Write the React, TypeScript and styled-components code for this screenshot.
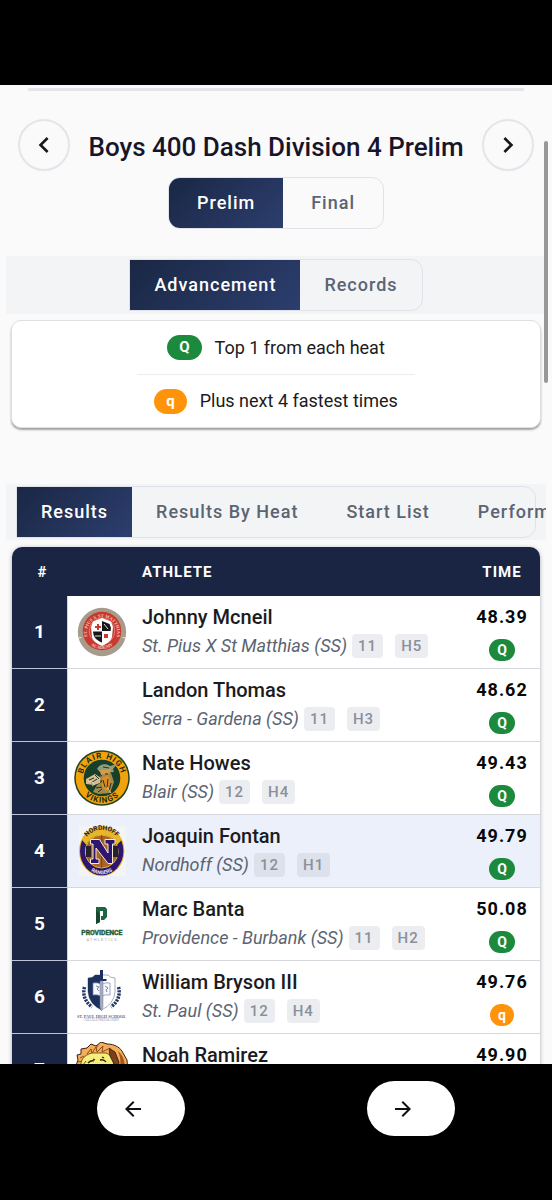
import React from 'react';
import styled, { createGlobalStyle } from 'styled-components';
import { MdArrowBack, MdArrowForward, MdChevronLeft, MdChevronRight } from 'react-icons/md';

const GlobalStyle = createGlobalStyle`
  *, *::before, *::after { box-sizing: border-box; }
  body {
    margin: 0;
    background: #000;
    color: #1b1b20;
    font-family: Roboto, "Liberation Sans", sans-serif;
  }
  button { font: inherit; }
`;

const Shell = styled.div`
  display: flex;
  flex-direction: column;
  height: 100vh;
`;

const StatusArea = styled.div`
  flex: none;
  height: 85px;
  background: #000;
`;

const Viewport = styled.main`
  position: relative;
  flex: 1;
  min-height: 0;
  overflow: hidden;
  padding: 3px 6px 0;
  background: #fafafa;
`;

const ScrollThumb = styled.div`
  position: absolute;
  top: 56px;
  right: 4px;
  width: 4px;
  height: 242px;
  border-radius: 2px;
  background: #989898;
`;

const Divider = styled.hr`
  height: 3px;
  margin: 0 22px 28px;
  border: 0;
  background: #e4e5ea;
`;

const EventHeader = styled.header`
  display: flex;
  align-items: center;
  justify-content: space-between;
  padding: 0 12px;
`;

const RoundButton = styled.button`
  display: grid;
  place-items: center;
  flex: none;
  width: 52px;
  height: 52px;
  padding: 0;
  border: 2px solid #e4e5ea;
  border-radius: 50%;
  background: #fafafa;
  color: #18181c;
`;

const EventTitle = styled.h1`
  margin: 0;
  padding-top: 4px;
  color: #17152b;
  font-size: 26px;
  font-weight: 500;
  line-height: 32px;
  white-space: nowrap;
`;

const RoundRow = styled.div`
  display: flex;
  justify-content: center;
  margin: 6px 0 27px;
`;

const TabBand = styled.div<{ $align?: string }>`
  display: flex;
  justify-content: ${(p) => p.$align ?? 'center'};
  padding: ${(p) => (p.$align ? '2px 10px' : '3px 0')};
  background: #f3f4f6;
  overflow: hidden;
`;

const TabGroup = styled.div<{ $fill?: boolean; $square?: boolean }>`
  display: flex;
  min-width: 0;
  flex: ${(p) => (p.$fill ? '1' : 'none')};
  border: 1px solid #e0e2e9;
  border-radius: ${(p) => (p.$square ? '0 12px 12px 0' : '12px')};
`;

const Tab = styled.button<{ $active?: boolean; $wide?: boolean; $round?: boolean }>`
  flex: none;
  height: 50px;
  padding: 0 ${(p) => (p.$wide ? 28 : 24)}px;
  border: 0;
  border-radius: ${(p) => (p.$round ? '11px 0 0 11px' : '0')};
  background: ${(p) => (p.$active ? 'linear-gradient(135deg, #1a2744, #2c3e6e)' : 'transparent')};
  color: ${(p) => (p.$active ? '#fff' : '#5b6472')};
  font-size: 18px;
  font-weight: 500;
  letter-spacing: 1px;
  line-height: 24px;
  white-space: nowrap;
`;

const LegendCard = styled.section`
  display: flex;
  justify-content: center;
  margin: 6px 5px 56px;
  border: 1px solid #dfe0e4;
  border-radius: 10px;
  background: #fff;
  box-shadow: 0 2px 2px rgba(0, 0, 0, 0.35);
`;

const LegendList = styled.ul`
  margin: 0;
  padding: 0;
  list-style: none;
`;

const LegendItem = styled.li`
  display: flex;
  align-items: center;
  justify-content: center;
  gap: 13px;
  height: 53px;
  padding: 0 17px;
  font-size: 18px;
  line-height: 24px;

  & + & { border-top: 1px solid #ececef; }
`;

const Mark = styled.span<{ $kind: 'Q' | 'q'; $small?: boolean }>`
  display: inline-block;
  padding: 0 ${(p) => (p.$small ? 8 : 12)}px;
  border-radius: 13px;
  background: ${(p) => (p.$kind === 'Q' ? '#1c8a3c' : '#ff930a')};
  color: #fff;
  font-size: ${(p) => (p.$small ? 14 : 15)}px;
  font-weight: 700;
  line-height: ${(p) => (p.$small ? 22 : 25)}px;
`;

const TableCard = styled.div`
  margin: 7px 6px 0;
  border-radius: 10px 10px 0 0;
  background: #fff;
  box-shadow: 0 1px 4px rgba(20, 30, 60, 0.35);
  overflow: hidden;
`;

const ResultsTable = styled.table`
  width: 100%;
  border-spacing: 0;
  table-layout: fixed;
`;

const HeadCell = styled.th<{ $width?: number; $align?: string; $indent?: number }>`
  width: ${(p) => (p.$width ? `${p.$width}px` : 'auto')};
  height: 49px;
  padding: 0 0 0 ${(p) => p.$indent ?? 0}px;
  background: #192543;
  color: #fff;
  font-size: 15px;
  font-weight: 700;
  letter-spacing: 1px;
  text-align: ${(p) => p.$align ?? 'center'};
`;

const Row = styled.tr<{ $highlight?: boolean }>`
  --chip: ${(p) => (p.$highlight ? '#dce1eb' : '#ecedf0')};
  background: ${(p) => (p.$highlight ? '#ecf0fa' : '#fff')};
`;

const Cell = styled.td`
  height: 73px;
  padding: 0;
  border-bottom: 1px solid #d6d8dd;
  vertical-align: middle;
`;

const RankCell = styled(Cell)`
  padding-bottom: 2px;
  border-right: 1px solid #d6d8dd;
  border-bottom-color: #bcc3d6;
  background: #192543;
  color: #fff;
  font-size: 19px;
  font-weight: 700;
  text-align: center;
`;

const LogoCell = styled(Cell)`
  text-align: center;

  svg { display: block; margin: 0 auto; }
`;

const AthleteCell = styled(Cell)`
  padding: 0 0 1px 7px;
  white-space: nowrap;
`;

const Name = styled.div`
  margin-bottom: 1px;
  font-size: 20px;
  font-weight: 500;
  line-height: 28px;
`;

const Details = styled.div`
  display: flex;
  align-items: center;
  height: 28px;
`;

const School = styled.span`
  margin-right: 5px;
  color: #5b6472;
  font-size: 18px;
  font-style: italic;
  line-height: 24px;
`;

const Chip = styled.span`
  margin-right: 12px;
  padding: 0 6px;
  border-radius: 4px;
  background: var(--chip);
  color: #8a909b;
  font-size: 15px;
  font-weight: 500;
  letter-spacing: 1px;
  line-height: 24px;
`;

const TimeCell = styled(Cell)`
  text-align: center;
`;

const Time = styled.div`
  margin-bottom: 9px;
  color: #08080a;
  font-size: 18px;
  font-weight: 700;
  letter-spacing: 1px;
  line-height: 26px;
`;

const BottomBar = styled.nav`
  display: flex;
  flex: none;
  justify-content: space-around;
  height: 136px;
  padding: 17px 6px 0;
  background: #000;
`;

const NavButton = styled.button`
  display: flex;
  align-items: center;
  justify-content: center;
  width: 88px;
  height: 55px;
  padding: 0 17px 0 0;
  border: 0;
  border-radius: 28px;
  background: #fff;
  color: #101014;
`;

const Logo = ({ label, children }: { label: string; children: React.ReactNode }) => (
  <svg width="56" height="56" viewBox="0 0 56 56" role="img" aria-label={label}>
    {children}
  </svg>
);

const PiusLogo = () => (
  <Logo label="St. Pius X St Matthias">
    <defs>
      <path id="pius-top" d="M14.5 35A15 15 0 1 1 41.5 35" />
      <path id="pius-bottom" d="M15.5 40A18 18 0 0 0 40.5 40" />
    </defs>
    <circle cx="28" cy="28" r="24.2" fill="#a79c8b" />
    <path d="M4.5 34l3-.6M51.5 34l-3-.6" stroke="#ece7df" />
    <circle cx="28" cy="27" r="19.3" fill="#c8392e" />
    <text fontSize="4.6" fontWeight="700" fill="#f0c9c0" fontFamily="Liberation Serif, serif">
      <textPath href="#pius-top" startOffset="50%" textAnchor="middle">ST. PIUS X ST MATTHIAS</textPath>
    </text>
    <text fontSize="4.6" fontWeight="700" fill="#f0c9c0" fontFamily="Liberation Serif, serif">
      <textPath href="#pius-bottom" startOffset="50%" textAnchor="middle">ACADEMY</textPath>
    </text>
    <circle cx="28" cy="27" r="12.8" fill="#c8392e" stroke="#e7b3aa" strokeWidth=".6" />
    <path d="M28 14l9 3.500 2 5.500-1 10C36.500 38 32 40 28 42c-4-2-8.500-4-10-9l-1-10 2-5.500z" fill="#fff" />
    <path d="M28 17v10h-9l-.5-4 2-3z" fill="#fff" />
    <path d="M28 17l7.500 3 1.500 4-.5 3H28z" fill="#17171a" />
    <path d="M19 27.500h9V38.500c-4-1.500-7.500-4-8.500-8z" fill="#17171a" />
    <path d="M24 20v6M21 23h6" stroke="#c8392e" strokeWidth="2" />
    <path d="M30 30h4v4h-4z" fill="#c8392e" />
    <path d="M30 20l4 5M21 32h6" stroke="#ddd" strokeWidth="1" />
  </Logo>
);

const BlairLogo = () => (
  <Logo label="Blair High Vikings">
    <defs>
      <path id="blair-top" d="M9.500 34A19.500 19.500 0 1 1 46.500 34" />
      <path id="blair-bottom" d="M5.500 38A24.600 24.600 0 0 0 50.500 38" />
    </defs>
    <circle cx="28" cy="28" r="27.8" fill="#23431f" />
    <circle cx="28" cy="28" r="26.3" fill="#f2a30c" />
    <circle cx="28" cy="28" r="18.3" fill="#173f29" />
    <text fontSize="8" fontWeight="700" letterSpacing="1" fill="#202b12">
      <textPath href="#blair-top" startOffset="50%" textAnchor="middle">BLAIR HIGH</textPath>
    </text>
    <text fontSize="8" fontWeight="700" letterSpacing="1" fill="#202b12">
      <textPath href="#blair-bottom" startOffset="50%" textAnchor="middle">VIKINGS</textPath>
    </text>
    <path d="M23 19c2-5 9-6 13-3l7-2-4 5 1 3-13 1z" fill="#8e9d7c" />
    <path d="M26 20l11-1-1 5-9 2z" fill="#d79b45" />
    <path d="M12 29l9-5 6 4-1 5-6 2-8-1z" fill="#d6bd90" />
    <path d="M26 25l11-2 3 9-4 11-11 1-6-2 4-7 5-3z" fill="#9d8c52" />
    <path d="M28 28l6-3 3 6-4 11-5-5z" fill="#dc8c22" />
    <path d="M15 30l5-2M17 33l6-4M25 24l3 2M31 24h3M29 30l2 7M34 29l-1 9M22 38l6-1M24 42l4-3M37 33l-2 8M29 17l6 1M21 25l4 4" stroke="#172419" strokeWidth=".9" fill="none" />
    <path d="M18 36l3-2M37 43l-4-6M14 31l6 2" stroke="#eee2bd" strokeWidth=".8" />
  </Logo>
);

const NordhoffLogo = () => (
  <Logo label="Nordhoff Rangers">
    <defs>
      <path id="nordhoff-top" d="M10 19A19 19 0 0 1 45.500 19" />
      <path id="nordhoff-bottom" d="M12 43.500A20 20 0 0 0 43.500 43.500" />
    </defs>
    <path d="M5 3h47v50H5z" fill="#f4f4f4" />
    <ellipse cx="27.7" cy="28" rx="22.7" ry="25.2" fill="#e8b62a" />
    <ellipse cx="27.7" cy="28" rx="21.7" ry="24.3" fill="#2d1671" />
    <path d="M8 17C17-1 39-1 47.500 17L43 22C39 9 17 9 12.500 22z" fill="#e8b62a" />
    <ellipse cx="27.7" cy="28.5" rx="16.3" ry="16.5" fill="#a96528" stroke="#e8b62a" />
    <path d="M12 23h5v11h-5zM38 23h6v11h-6z" fill="#25222a" />
    <path d="M27.700 12v33M17 16q6 12 0 25M38.500 16q-6 12 0 25" fill="none" stroke="#683713" strokeWidth=".7" />
    <text fontSize="6.5" fontWeight="700" fill="#2a1a26">
      <textPath href="#nordhoff-top" startOffset="50%" textAnchor="middle">NORDHOFF</textPath>
    </text>
    <path d="M13 42c8 6 21 6 29 0l-3 6c-6 5-17 5-23 0z" fill="#2d1671" />
    <text fontSize="5" fontWeight="700" fill="#eee9f8">
      <textPath href="#nordhoff-bottom" startOffset="50%" textAnchor="middle">RANGERS</textPath>
    </text>
    <path d="M16.500 16.500h9L34 30V21h-3v-4.500h10V21h-2.500v19.500H34L22 25v11h3v4.500h-8.500V36H19V21h-2.500z" fill="#2d1671" stroke="#f7ead2" strokeWidth="1" />
  </Logo>
);

const ProvidenceLogo = () => (
  <Logo label="Providence Athletics">
    <path d="M22 11h9l2 2v8l-3 3h-3v-4h2v-5h-3v11l-4 2z" fill="#1e6541" />
    <path d="M22 14v14l4-2v-8" fill="#17482f" />
    <text x="27.8" y="39" textAnchor="middle" fontSize="6.8" fontWeight="700" fill="#1d5c3c" stroke="#1d5c3c" strokeWidth=".4">PROVIDENCE</text>
    <text x="28.2" y="44.5" textAnchor="middle" fontSize="4" letterSpacing="1.2" fill="#a4a7a8">ATHLETICS</text>
  </Logo>
);

const PaulLogo = () => (
  <Logo label="St. Paul High School">
    <path d="M14 9q5 0 7-3h13q2 3 7 3v14q-1 12-13.500 18Q15 35 14 23z" fill="#fff" stroke="#8d98b1" strokeWidth=".8" />
    <path d="M14 9q5 0 7-3h6.500v35Q15 35 14 23z" fill="#1d305e" />
    <path d="M10.500 18q-3 12 7.500 20M44.500 18q3 12-7.500 20" fill="none" stroke="#26386a" strokeWidth="3.5" strokeDasharray="2.2 1" />
    <path d="M19 14q5-1 8.500 1.500Q31 13 36 14v12q-5-1-8.500 1.500Q24 25 19 26z" fill="#f7f8fb" stroke="#7985a3" strokeWidth=".7" />
    <path d="M22 17l3 1-2 2 2 2M31 17l3 2-2 2 1 2" fill="none" stroke="#46557c" strokeWidth=".7" />
    <path d="M27.500 1v9" stroke="#1d305e" strokeWidth="3" />
    <path d="M22.500 11h10" stroke="#1d305e" strokeWidth="2" />
    <path d="M26 12h3v26l-1.500 4-1.500-4z" fill="#a7adc1" stroke="#717d9d" strokeWidth=".5" />
    <text x="27.5" y="48.5" textAnchor="middle" fontSize="4.2" fontWeight="700" fill="#5d6886" fontFamily="Liberation Serif, serif">ST. PAUL HIGH SCHOOL</text>
    <text x="27.5" y="51.5" textAnchor="middle" fontSize="3" fill="#8a93a8" fontFamily="Liberation Serif, serif">COLLEGE PREPARATORY</text>
  </Logo>
);

const LionLogo = () => (
  <Logo label="Lion">
    <path d="M1 26L4 18 3 13l4-1 0-5 6-1 4-4 5 2 5-4 6 2c8 0 14 4 16 9l4 7 1 12v26H1z" fill="#f4ae59" stroke="#38200e" strokeWidth="1" />
    <path d="M7 26c-1-8 3-13 11-15l14 0c6 2 8 8 8 15v24H8z" fill="#f6ee7c" stroke="#5b3a13" strokeWidth=".8" />
    <path d="M36 14l-1-8 6 4 4 10-1 6-4-4z" fill="#7b4018" stroke="#2d190b" strokeWidth=".8" />
    <path d="M44 9c5 4 7 10 7 17l-5-2c1-6 0-10-2-15z" fill="#a6571d" />
    <path d="M13 12l4-5 1 4 4-6 1 5 6-6-1 6 6-3M6 16l4-2M4 20l4-1M24 3l-2 3M40 17l3 4M9 23l3-4" fill="none" stroke="#8a4b1a" strokeWidth="1" />
    <path d="M14 21q3-3 6-2M26 18q4-1 6 2M19 17l2 1M28 15l2 1" fill="none" stroke="#282010" strokeWidth="1.3" />
  </Logo>
);

type Result = {
  rank: number;
  logo: React.ReactNode;
  name: string;
  school: string;
  grade?: string;
  heat?: string;
  time: string;
  mark?: 'Q' | 'q';
  highlight?: boolean;
};

const results: Result[] = [
  { rank: 1, logo: <PiusLogo />, name: 'Johnny Mcneil', school: 'St. Pius X St Matthias (SS)', grade: '11', heat: 'H5', time: '48.39', mark: 'Q' },
  { rank: 2, logo: null, name: 'Landon Thomas', school: 'Serra - Gardena (SS)', grade: '11', heat: 'H3', time: '48.62', mark: 'Q' },
  { rank: 3, logo: <BlairLogo />, name: 'Nate Howes', school: 'Blair (SS)', grade: '12', heat: 'H4', time: '49.43', mark: 'Q' },
  { rank: 4, logo: <NordhoffLogo />, name: 'Joaquin Fontan', school: 'Nordhoff (SS)', grade: '12', heat: 'H1', time: '49.79', mark: 'Q', highlight: true },
  { rank: 5, logo: <ProvidenceLogo />, name: 'Marc Banta', school: 'Providence - Burbank (SS)', grade: '11', heat: 'H2', time: '50.08', mark: 'Q' },
  { rank: 6, logo: <PaulLogo />, name: 'William Bryson III', school: 'St. Paul (SS)', grade: '12', heat: 'H4', time: '49.76', mark: 'q' },
  { rank: 7, logo: <LionLogo />, name: 'Noah Ramirez', school: '', time: '49.90', mark: 'q' },
];

export default function App() {
  return (
    <>
      <GlobalStyle />
      <Shell>
        <StatusArea />
        <Viewport>
          <Divider />
          <EventHeader>
            <RoundButton aria-label="Previous event"><MdChevronLeft size={32} /></RoundButton>
            <EventTitle>Boys 400 Dash Division 4 Prelim</EventTitle>
            <RoundButton aria-label="Next event"><MdChevronRight size={32} /></RoundButton>
          </EventHeader>

          <RoundRow>
            <TabGroup>
              <Tab $active $wide $round>Prelim</Tab>
              <Tab $wide>Final</Tab>
            </TabGroup>
          </RoundRow>

          <TabBand>
            <TabGroup $square>
              <Tab $active>Advancement</Tab>
              <Tab>Records</Tab>
            </TabGroup>
          </TabBand>

          <LegendCard>
            <LegendList>
              <LegendItem><Mark $kind="Q">Q</Mark>Top 1 from each heat</LegendItem>
              <LegendItem><Mark $kind="q">q</Mark>Plus next 4 fastest times</LegendItem>
            </LegendList>
          </LegendCard>

          <TabBand $align="flex-start">
            <TabGroup $fill $square>
              <Tab $active>Results</Tab>
              <Tab>Results By Heat</Tab>
              <Tab>Start List</Tab>
              <Tab>Perform</Tab>
            </TabGroup>
          </TabBand>

          <TableCard>
            <ResultsTable>
              <thead>
                <tr>
                  <HeadCell scope="col" $width={56} $indent={5}>#</HeadCell>
                  <HeadCell $width={67} aria-label="Team logo" />
                  <HeadCell scope="col" $align="left" $indent={7}>ATHLETE</HeadCell>
                  <HeadCell scope="col" $width={76}>TIME</HeadCell>
                </tr>
              </thead>
              <tbody>
                {results.map((r) => (
                  <Row key={r.rank} $highlight={r.highlight}>
                    <RankCell>{r.rank}</RankCell>
                    <LogoCell>{r.logo}</LogoCell>
                    <AthleteCell>
                      <Name>{r.name}</Name>
                      <Details>
                        {r.school && <School>{r.school}</School>}
                        {r.grade && <Chip>{r.grade}</Chip>}
                        {r.heat && <Chip>{r.heat}</Chip>}
                      </Details>
                    </AthleteCell>
                    <TimeCell>
                      <Time>{r.time}</Time>
                      {r.mark && <Mark $kind={r.mark} $small>{r.mark}</Mark>}
                    </TimeCell>
                  </Row>
                ))}
              </tbody>
            </ResultsTable>
          </TableCard>
          <ScrollThumb />
        </Viewport>
        <BottomBar aria-label="Page navigation">
          <NavButton aria-label="Back"><MdArrowBack size={24} /></NavButton>
          <NavButton aria-label="Forward"><MdArrowForward size={24} /></NavButton>
        </BottomBar>
      </Shell>
    </>
  );
}
